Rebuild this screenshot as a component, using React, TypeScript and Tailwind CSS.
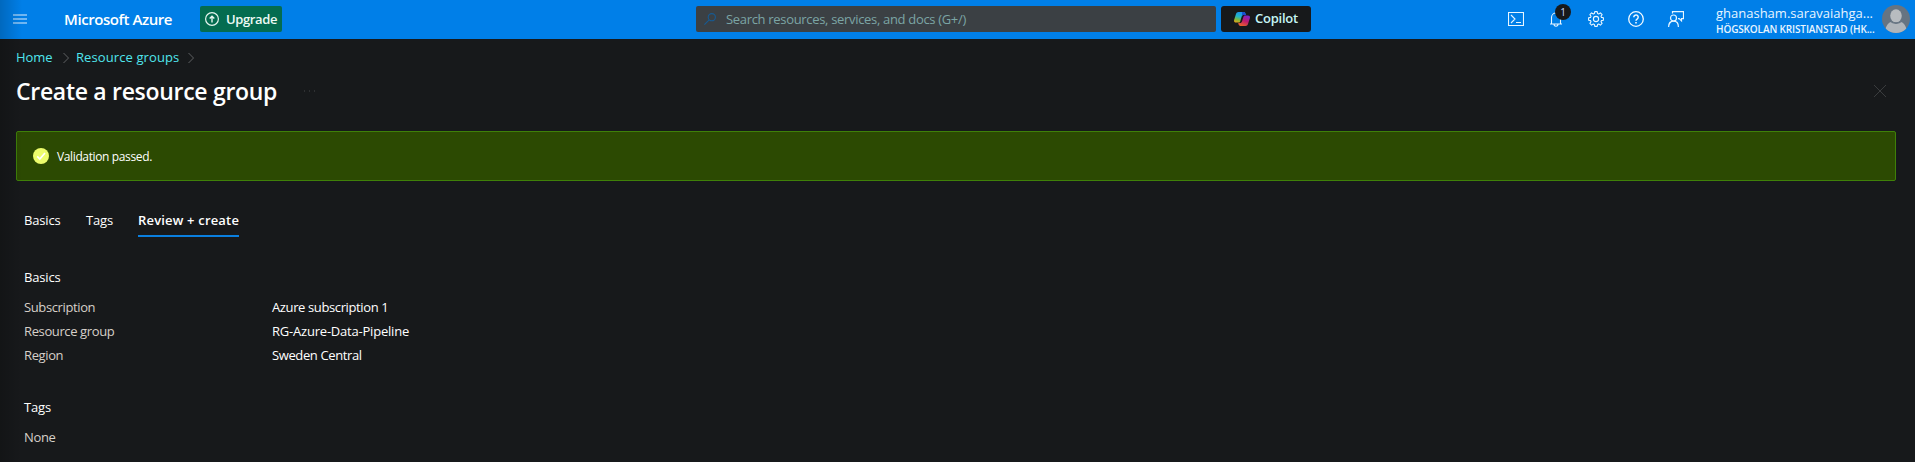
import React from "react";

function Chevron() {
  return (
    <svg width="8" height="12" viewBox="0 0 8 12" fill="none" stroke="#5f6163" strokeWidth="1">
      <path d="M1.5 1 6.5 6l-5 5" />
    </svg>
  );
}

function CopilotLogo() {
  return (
    <svg width="16" height="14" viewBox="0 0 16 14">
      <defs>
        <linearGradient id="cpl" x1="0.6" y1="0" x2="0.3" y2="1">
          <stop offset="0" stopColor="#1b8ff0" />
          <stop offset="0.45" stopColor="#22b5c9" />
          <stop offset="0.75" stopColor="#7fb83a" />
          <stop offset="1" stopColor="#e0a41a" />
        </linearGradient>
        <linearGradient id="cpr" x1="0.7" y1="0" x2="0.3" y2="1">
          <stop offset="0" stopColor="#7a25c9" />
          <stop offset="0.5" stopColor="#c01a6c" />
          <stop offset="1" stopColor="#e8622a" />
        </linearGradient>
      </defs>
      <path d="M4.6 0h5c1 0 1.500.5 1.800 1.400L11.800 3H9.500C8.500 3 8 3.600 7.700 4.500L6.200 9.400C5.900 10.300 5.400 10.600 4.500 10.600H2C.4 10.600-.2 9.500.1 8L1.900 2.200C2.400.7 3.200 0 4.600 0Z" fill="url(#cpl)" />
      <path d="M8.200 0h1.400c1 0 1.500.5 1.800 1.400L11.900 3H9.500c-.8 0-1.300.4-1.600 1.100Z" fill="#1a4fd0" />
      <path d="M11.400 14h-5c-1 0-1.500-.5-1.800-1.400L4.200 11h1.900c1 0 1.600-.6 1.900-1.500l1.500-4.900c.3-.9.900-1.200 1.700-1.200H14c1.600 0 2.200 1.100 1.900 2.600l-1.800 5.800C13.600 13.300 12.800 14 11.400 14Z" fill="url(#cpr)" />
    </svg>
  );
}

function TerminalIcon() {
  return (
    <svg width="16" height="14" viewBox="0 0 16 14" fill="none" stroke="#e8f6ff" strokeWidth="1.1">
      <path d="M.5.5h15v13H.5zM3 3l4 4-4 4M8 10.500h5" />
    </svg>
  );
}

function BellIcon() {
  return (
    <svg width="12" height="16" viewBox="0 0 12 16" fill="none" stroke="#e8f6ff" strokeWidth="1.100">
      <path d="M0 13h12M1.500 13V6.500a4.500 4.500 0 0 1 9 0V13M4 13.300a2 1.900 0 0 0 4 0" />
    </svg>
  );
}

function GearIcon() {
  return (
    <svg width="16" height="16" viewBox="0 0 16 16" fill="none" stroke="#e8f6ff" strokeWidth="1.100" strokeLinejoin="round">
      <path d="M6.800.6h2.400l.4 1.900 1.100.5 1.700-1.100 1.700 1.700L13 5.300l.5 1.100 1.900.4v2.400l-1.900.4-.5 1.100 1.100 1.700-1.700 1.700-1.700-1.100-1.100.5-.4 1.900H6.800l-.4-1.900-1.100-.5-1.700 1.100-1.700-1.700L3 10.700l-.5-1.100-1.900-.4V6.800l1.900-.4L3 5.300 1.900 3.600l1.700-1.700L5.300 3l1.100-.5Z" />
      <circle cx="8" cy="8" r="2.600" />
    </svg>
  );
}

function HelpIcon() {
  return (
    <svg width="16" height="16" viewBox="0 0 16 16" fill="none" stroke="#f2faff" strokeWidth="1.300">
      <circle cx="8" cy="8" r="7.300" />
      <path d="M5.800 6.200a2.200 2.200 0 1 1 3.500 1.700C8.400 8.500 8 8.900 8 9.800" strokeWidth="1.500" />
      <path d="M7.200 11h1.600v1.600H7.200z" fill="#f2faff" stroke="none" />
    </svg>
  );
}

function FeedbackIcon() {
  return (
    <svg width="16" height="16" viewBox="0 0 16 16" fill="none" stroke="#e8f6ff" strokeWidth="1.200">
      <path d="M4.500 2.500V.6h11v7h-2v2.300l-2.300-2.300H10" />
      <circle cx="5.500" cy="7" r="3" />
      <path d="M.6 16c0-3.500 2-5.800 4.900-5.800s4.900 2.300 4.900 5.800" />
    </svg>
  );
}

function HeaderButton({ children }: { children: React.ReactNode }) {
  return <button className="relative flex h-[38px] w-10 items-center justify-center">{children}</button>;
}

function Header() {
  return (
    <header className="flex h-[39px] items-start bg-[#007fe8]">
      <div className="flex h-[38px] w-[696px] shrink-0 items-center pl-[13px]">
        <div className="flex w-[14px] flex-col gap-[2px]">
          <span className="h-[2px] bg-[#6fb6f2]" />
          <span className="h-[2px] bg-[#6fb6f2]" />
          <span className="h-[2px] bg-[#6fb6f2]" />
        </div>
        <span className="ml-[37px] w-[136px] pt-px text-[15px] font-semibold tracking-[-0.43px] text-white">Microsoft Azure</span>
        <button className="flex h-[26px] w-[82px] items-center rounded-[2px] bg-[#046c50] pl-[5px]">
          <svg width="14" height="14" viewBox="0 0 14 14" fill="none" stroke="#e6f5ef" strokeWidth="1.200">
            <circle cx="7" cy="7" r="6.400" />
            <path d="M7 10.500V4.500M4.700 6.500 7 4.200l2.300 2.300" strokeWidth="1.400" />
          </svg>
          <span className="ml-[7px] pt-px text-[13px] font-semibold tracking-[-0.38px] text-[#eefaf5]">Upgrade</span>
        </button>
      </div>
      <div className="mt-[6px] flex h-[26px] w-[520px] items-center rounded-[2px] bg-[#3b4044] pl-[8px]">
        <svg width="12" height="12" viewBox="0 0 12 12" fill="none" stroke="#175a92" strokeWidth="1.100">
          <circle cx="7.800" cy="4.200" r="3.600" />
          <path d="M5.200 6.800.4 11.600" />
        </svg>
        <span className="ml-[10px] pt-px text-[13px] tracking-[-0.32px] text-[#7ba5a5]">Search resources, services, and docs (G+/)</span>
      </div>
      <button className="mt-[6px] ml-[5px] flex h-[26px] w-[90px] items-center rounded-[3px] bg-[#17191b] pb-px pl-[13px]">
        <CopilotLogo />
        <span className="ml-[5px] text-[13px] font-semibold tracking-[-0.23px] text-[#c5f5f5]">Copilot</span>
      </button>
      <nav className="ml-auto flex">
        <HeaderButton><TerminalIcon /></HeaderButton>
        <HeaderButton>
          <BellIcon />
          <span className="absolute top-[4px] left-[19px] flex size-4 items-center justify-center rounded-full bg-[#17191b] text-[10px] text-[#c9d6ff]">1</span>
        </HeaderButton>
        <HeaderButton><GearIcon /></HeaderButton>
        <HeaderButton><HelpIcon /></HeaderButton>
        <HeaderButton><FeedbackIcon /></HeaderButton>
      </nav>
      <div className="ml-5 flex w-[166px] flex-col whitespace-nowrap text-[#e8f5ff]">
        <span className="mt-[6px] text-[13px] leading-[15px]">ghanasham.saravaiahga...</span>
        <span className="pt-px text-[10px] leading-[15px] font-semibold tracking-[-0.13px]">HÖGSKOLAN KRISTIANSTAD (HK...</span>
      </div>
      <svg className="mt-[5px] mr-[5px]" width="28" height="28" viewBox="0 0 28 28">
        <defs><clipPath id="avatar"><circle cx="14" cy="14" r="14" /></clipPath></defs>
        <g clipPath="url(#avatar)">
          <rect width="28" height="28" fill="#667482" />
          <ellipse cx="14" cy="10.800" rx="5.800" ry="6.500" fill="#b8bcc0" />
          <path d="M3 28c0-7 4-11 7-11.200 2.500 2 5.500 2 8 0C21 17 25 21 25 28Z" fill="#b0b5ba" />
          <path d="M8.200 16.200c3 3 8.600 3 11.600 0" stroke="#667482" strokeWidth="1.200" fill="none" />
        </g>
      </svg>
    </header>
  );
}

function Row({ label, value }: { label: string; value: string }) {
  return (
    <div className="flex h-6 items-center">
      <dt className="w-[248px] text-[#d6d0c9]">{label}</dt>
      <dd className={value.startsWith("RG") ? "tracking-[-0.21px] text-white" : "text-white"}>{value}</dd>
    </div>
  );
}

export default function App() {
  return (
    <div className="relative h-[462px] w-full overflow-hidden bg-[#17191b] font-['Open_Sans',sans-serif] text-[13px] text-white">
      <Header />
      <nav className="flex h-9 items-center pt-[2px] pl-4 text-[#50e6ee]">
        <span className="w-[46px] tracking-[-0.100px]">Home</span>
        <Chevron />
        <span className="ml-[6px] w-[111px] tracking-[0.1px]">Resource groups</span>
        <Chevron />
      </nav>
      <div className="flex h-[30px] items-center pt-[2px] pr-[29px] pl-[16px]">
        <h1 className="w-[288px] text-[23px] font-semibold tracking-[-0.3px]">Create a resource group</h1>
        <svg width="11" height="2" viewBox="0 0 11 2" fill="#47494b">
          <path d="M0 .5h1v1H0zM5 .5h1v1H5zM10 .5h1v1h-1z" />
        </svg>
        <svg className="ml-auto" width="12" height="12" viewBox="0 0 12 12" stroke="#3a3c3e" strokeWidth="1">
          <path d="m0 0 12 12M12 0 0 12" />
        </svg>
      </div>
      <div className="mt-[26px] mr-[19px] ml-4 flex h-[50px] items-center rounded-[2px] border border-[#3f8008] bg-[#2c4a02] pl-4">
        <svg width="16" height="16" viewBox="0 0 16 16">
          <circle cx="8" cy="8" r="8" fill="#ecfc6c" />
          <path d="m4.200 8.400 2.600 2.600 5.200-6" fill="none" stroke="#ffffff" strokeWidth="1.700" />
        </svg>
        <span className="ml-2 pt-px text-[12px] tracking-[-0.37px]">Validation passed.</span>
      </div>
      <div className="mt-[29px] flex h-[27px] pl-6 leading-5">
        <span className="w-[62px] tracking-[-0.17px]">Basics</span>
        <span className="w-[52px] tracking-[-0.16px]">Tags</span>
        <span className="w-[101px] border-b-2 border-[#0a7fdf] font-semibold whitespace-nowrap tracking-[0.18px]">Review + create</span>
      </div>
      <section className="mt-[28px] pl-6">
        <h2 className="h-6 leading-6 tracking-[-0.17px]">Basics</h2>
        <dl className="mt-[7px] tracking-[-0.38px]">
          <Row label="Subscription" value="Azure subscription 1" />
          <Row label="Resource group" value="RG-Azure-Data-Pipeline" />
          <Row label="Region" value="Sweden Central" />
        </dl>
      </section>
      <section className="mt-[27px] pl-6">
        <h2 className="h-6 leading-6 tracking-[-0.16px]">Tags</h2>
        <p className="mt-[6px] leading-6 tracking-[-0.35px] text-[#d6d0c9]">None</p>
      </section>
      <div className="pointer-events-none absolute inset-y-0 left-0 w-[22px] bg-linear-to-r from-black/18 to-transparent" />
    </div>
  );
}
